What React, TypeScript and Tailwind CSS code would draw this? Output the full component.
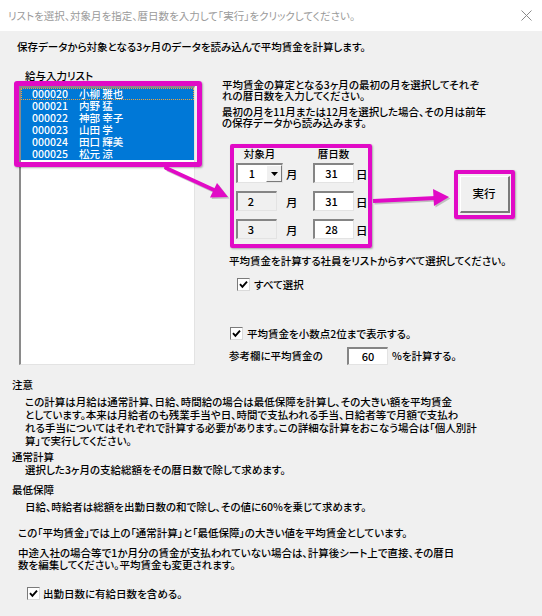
const employees = [
  { code: "000020", name: "小柳 雅也" },
  { code: "000021", name: "内野 猛" },
  { code: "000022", name: "神部 幸子" },
  { code: "000023", name: "山田 学" },
  { code: "000024", name: "田口 輝美" },
  { code: "000025", name: "松元 涼" },
];

const months = [
  { month: "1", days: "31", select: true },
  { month: "2", days: "31", select: false },
  { month: "3", days: "28", select: false },
];

function CheckBox() {
  return (
    <span className="inline-flex h-[13px] w-[13px] shrink-0 items-center justify-center border-t border-l border-r border-b border-t-[#7a7a7a] border-l-[#7a7a7a] border-r-[#dadada] border-b-[#dadada] bg-white">
      <svg width="9" height="9" viewBox="0 0 9 9">
        <path d="M1 4.2 L3.4 6.8 L8 1.6" stroke="#000" strokeWidth="1.9" fill="none" />
      </svg>
    </span>
  );
}

// sunken text field like a Windows form
const field =
  "flex items-center justify-center border-t-2 border-l-2 border-r border-b border-t-[#858585] border-l-[#858585] border-r-[#e3e3e3] border-b-[#e3e3e3]";

export default function App() {
  return (
    <div className="relative h-[616px] w-[542px] overflow-hidden bg-[#f0f0f0] font-['Noto_Sans_CJK_JP','Liberation_Sans',sans-serif] text-[10.5px] font-medium text-black [font-feature-settings:'palt']">
      {/* title bar */}
      <div className="flex h-[31px] items-center justify-between bg-white pl-[8px] pr-[10px]">
        <span className="font-normal leading-[12px] text-[#9a9a9a]">
          リストを選択、対象月を指定、暦日数を入力して「実行」をクリックしてください。
        </span>
        <svg width="11" height="11" viewBox="0 0 11 11">
          <path d="M0.5 0.5 L10.5 10.5 M10.5 0.5 L0.5 10.5" stroke="#8a8a8a" strokeWidth="1" />
        </svg>
      </div>

      <p className="mt-[10px] pl-[17px] leading-[12px]">
        保存データから対象となる3ヶ月のデータを読み込んで平均賃金を計算します。
      </p>

      <div className="mt-[17px] flex pl-[19px]">
        {/* list */}
        <div className="flex w-[176px] flex-col">
          <div className="pl-[6px] leading-[12px]">給与入力リスト</div>
          <div className="mt-[4px] h-[279px] border-t-2 border-l-2 border-r border-b border-t-[#8a8a8a] border-l-[#8a8a8a] border-r-[#e3e3e3] border-b-[#e3e3e3] bg-white">
            {employees.map((e, i) => (
              <div
                key={e.code}
                className={
                  "flex h-[12px] items-center bg-[#0078d7] pl-[11px] leading-[12px] text-white" +
                  (i === 0 ? " outline-1 -outline-offset-1 outline-dotted outline-[#f3a33a]" : "")
                }
              >
                <span className="w-[47px]">{e.code}</span>
                <span>{e.name}</span>
              </div>
            ))}
          </div>
        </div>

        {/* right side */}
        <div className="ml-[27px] flex flex-col pt-[9px]">
          <p className="leading-[11px]">
            平均賃金の算定となる3ヶ月の最初の月を選択してそれぞ
            <br />
            れの暦日数を入力してください。
          </p>
          <p className="mt-[5px] leading-[11px]">
            最初の月を11月または12月を選択した場合、その月は前年
            <br />
            の保存データから読み込みます。
          </p>

          <div className="ml-[14px] mt-[20px] flex items-start">
            <div className="flex flex-col">
              <div className="flex h-[15px] leading-[12px]">
                <span className="w-[47px] text-center">対象月</span>
                <span className="w-[30px]" />
                <span className="w-[41px] text-center">暦日数</span>
              </div>
              <div className="flex flex-col gap-[8px]">
                {months.map((m) => (
                  <div key={m.month} className="flex h-[20px] items-center">
                    <div className="w-[47px]">
                      {m.select ? (
                        <div className="flex h-[20px] w-[47px] border-t-2 border-l-2 border-r border-b border-t-[#858585] border-l-[#858585] border-r-[#e3e3e3] border-b-[#e3e3e3] bg-white">
                          <span className="flex flex-1 items-center justify-center text-[11px]">{m.month}</span>
                          <span className="flex w-[16px] items-center justify-center border-t border-l border-r border-b border-t-white border-l-white border-r-[#7a7a7a] border-b-[#7a7a7a] bg-[#f0f0f0]">
                            <svg width="7" height="4" viewBox="0 0 7 4">
                              <path d="M0 0 H7 L3.5 4 Z" fill="#000" />
                            </svg>
                          </span>
                        </div>
                      ) : (
                        <div className={field + " h-[20px] w-[41px] bg-[#f0f0f0] pr-[12px] text-[11px]"}>{m.month}</div>
                      )}
                    </div>
                    <span className="w-[30px] pl-[3px] pt-[3px] text-[11.5px]">月</span>
                    <div className={field + " h-[20px] w-[41px] bg-white pr-[5px] text-[11px]"}>{m.days}</div>
                    <span className="ml-[2px] pt-[3px] text-[11.5px]">日</span>
                  </div>
                ))}
              </div>
            </div>
            <button className="ml-[92px] mt-[28px] flex h-[37px] w-[50px] items-center justify-center border-t border-l border-r-2 border-b-2 border-t-white border-l-white border-r-[#7a7a7a] border-b-[#7a7a7a] bg-[#f0f0f0] text-[11.5px] text-black">
              実行
            </button>
          </div>

          <p className="ml-[7px] mt-[16px] leading-[12px]">
            平均賃金を計算する社員をリストからすべて選択してください。
          </p>
          <div className="ml-[15px] mt-[11px] flex h-[13px] items-center gap-[4px]">
            <CheckBox />
            <span>すべて選択</span>
          </div>
          <div className="ml-[8px] mt-[36px] flex h-[13px] items-center gap-[4px]">
            <CheckBox />
            <span>平均賃金を小数点2位まで表示する。</span>
          </div>
          <div className="ml-[7px] mt-[7px] flex h-[18px] items-center">
            <span className="w-[118px]">参考欄に平均賃金の</span>
            <div className={field + " h-[18px] w-[41px] bg-white text-[11px]"}>60</div>
            <span className="ml-[4px]">%を計算する。</span>
          </div>
        </div>
      </div>

      {/* notes */}
      <div className="flex flex-col leading-[13px]">
        <div className="mt-[13px] pl-[12px]">注意</div>
        <p className="mt-[4px] whitespace-nowrap pl-[25px]">
          この計算は月給は通常計算、日給、時間給の場合は最低保障を計算し、その大きい額を平均賃金
          <br />
          としています。本来は月給者のも残業手当や日、時間で支払われる手当、日給者等で月額で支払わ
          <br />
          れる手当についてはそれぞれで計算する必要があります。この詳細な計算をおこなう場合は「個人別計
          <br />
          算」で実行してください。
        </p>
        <div className="mt-[3px] pl-[12px]">通常計算</div>
        <p className="pl-[25px]">選択した3ヶ月の支給総額をその暦日数で除して求めます。</p>
        <div className="mt-[7px] pl-[12px]">最低保障</div>
        <p className="mt-[4px] pl-[25px]">日給、時給者は総額を出勤日数の和で除し、その値に60%を乗じて求めます。</p>
        <p className="mt-[13px] pl-[18px]">
          この「平均賃金」では上の「通常計算」と「最低保障」の大きい値を平均賃金としています。
        </p>
        <p className="mt-[8px] whitespace-nowrap pl-[18px] leading-[12px]">
          中途入社の場合等で1か月分の賃金が支払われていない場合は、計算後シート上で直接、その暦日
          <br />
          数を編集してください。平均賃金も変更されます。
        </p>
        <div className="mt-[16px] flex h-[13px] items-center gap-[3px] pl-[27px]">
          <CheckBox />
          <span>出勤日数に有給日数を含める。</span>
        </div>
      </div>

      {/* magenta annotations */}
      <div className="absolute left-[14px] top-[81px] h-[86px] w-[188px] rounded-[3px] border-[5px] border-[#e10ac6] shadow-[1px_1px_2px_rgba(0,0,0,0.3)]" />
      <div className="absolute left-[230px] top-[144px] h-[104px] w-[142px] rounded-[2px] border-[4px] border-[#e10ac6] shadow-[1px_1px_2px_rgba(0,0,0,0.3)]" />
      <div className="absolute left-[454px] top-[170px] h-[49px] w-[61px] rounded-[2px] border-[4px] border-[#e10ac6] shadow-[1px_1px_2px_rgba(0,0,0,0.3)]" />
      <svg className="pointer-events-none absolute left-0 top-0" width="542" height="616" viewBox="0 0 542 616">
        <g opacity="0.3" transform="translate(1.5 1.5)">
          <path d="M166 168 L214 190" stroke="#555" strokeWidth="4" />
          <polygon points="228,197 210,197.5 217,183" fill="#555" />
          <path d="M373 201 L436 198" stroke="#555" strokeWidth="4" />
          <polygon points="449,197 433,189 434,206" fill="#555" />
        </g>
        <path d="M166 168 L214 190" stroke="#e10ac6" strokeWidth="4" strokeLinecap="round" />
        <polygon points="228,197 210,197.5 217,183" fill="#e10ac6" />
        <path d="M373 201 L436 198" stroke="#e10ac6" strokeWidth="4" />
        <polygon points="449,197 433,189 434,206" fill="#e10ac6" />
      </svg>
    </div>
  );
}
